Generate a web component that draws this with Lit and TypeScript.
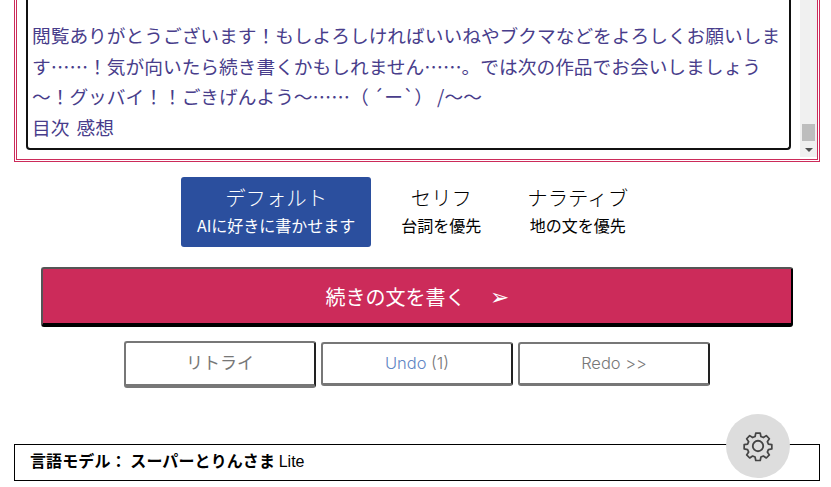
import { css, html, LitElement } from "lit";
import { customElement } from "lit/decorators.js";

@customElement("app-root")
export class AppRoot extends LitElement {
  render() {
    return html`
      <main>
        <section class="story-frame">
          <div class="story">
            <p class="spacer"></p>
            <p>閲覧ありがとうございます！もしよろしければいいねやブクマなどをよろしくお願いします……！気が向いたら続き書くかもしれません……。では次の作品でお会いしましょう～！グッバイ！！ごきげんよう～……（ ´ー\`） /～～</p>
            <p class="links">目次 感想</p>
          </div>
          <div class="scrollbar">
            <span class="thumb"></span>
            <span class="arrow"></span>
          </div>
        </section>

        <nav class="modes">
          <button class="mode active">
            <span class="title">デフォルト</span>
            <span class="sub">AIに好きに書かせます</span>
          </button>
          <button class="mode">
            <span class="title">セリフ</span>
            <span class="sub">台詞を優先</span>
          </button>
          <button class="mode">
            <span class="title">ナラティブ</span>
            <span class="sub">地の文を優先</span>
          </button>
        </nav>

        <button class="write">続きの文を書く<span class="send">➢</span></button>

        <div class="actions">
          <button class="action retry">リトライ</button>
          <button class="action"><span class="undo">Undo</span> (1)</button>
          <button class="action">Redo &gt;&gt;</button>
        </div>

        <footer class="model">
          <b>言語モデル： スーパーとりんさま</b> <span class="lite">Lite</span>
          <button class="settings" aria-label="設定">
            <svg viewBox="0 0 24 24" width="34" height="34" fill="none" stroke="#444" stroke-width="1.3" stroke-linejoin="round">
              <path d="M10.3 2.6h3.4l.5 2.6 1.9.8 2.2-1.5 2.3 2.4-1.5 2.2.8 1.9 2.6.4v3.2l-2.6.5-.8 1.9 1.5 2.2-2.3 2.3-2.2-1.5-1.9.8-.5 2.6h-3.4l-.5-2.6-1.9-.8-2.2 1.5-2.3-2.3 1.5-2.2-.8-1.9-2.6-.5v-3.2l2.6-.4.8-1.9-1.5-2.2 2.3-2.4 2.2 1.5 1.9-.8z" transform="translate(12 12) scale(.93) translate(-12 -12.4)"/>
              <circle cx="12" cy="12" r="3.7"/>
            </svg>
          </button>
        </footer>
      </main>
    `;
  }

  static styles = css`
    :host {
      display: block;
      height: 487px;
      overflow: hidden;
      background: #fff;
      font-family: "Noto Sans CJK JP", "Liberation Sans", sans-serif;
    }

    main {
      padding: 0 11px 0 14px;
    }

    button {
      font-family: inherit;
      cursor: pointer;
    }

    .story-frame {
      box-sizing: border-box;
      height: 162px;
      display: flex;
      gap: 9px;
      padding: 0 0 2px 9px;
      border: 3px double #cc2b5a;
      border-top: 0;
    }

    .story {
      flex: 1;
      box-sizing: border-box;
      height: 150px;
      padding: 0 4px;
      border: 2px solid #111;
      border-top: 0;
      border-radius: 0 0 4px 4px;
      color: #483d8b;
      font-size: 18.72px;
      line-height: 30.6px;
    }

    .story p {
      margin: 0;
    }

    .story .spacer {
      height: 20px;
    }

    .story .links {
      word-spacing: 3px;
    }

    .scrollbar {
      width: 17px;
      position: relative;
      background: #f0f0f0;
    }

    .thumb {
      position: absolute;
      left: 2px;
      right: 2px;
      top: 124px;
      height: 17px;
      background: #bdbdbd;
    }

    .arrow {
      position: absolute;
      left: 5px;
      top: 148px;
      border: 4px solid transparent;
      border-top: 4px solid #505050;
    }

    .modes {
      display: flex;
      justify-content: center;
      gap: 14px;
      margin-top: 15px;
      padding-right: 9px;
    }

    .mode {
      display: flex;
      flex-direction: column;
      align-items: center;
      height: 70px;
      padding: 7px 16px 0;
      border: 0;
      border-radius: 3px;
      background: none;
      color: #000;
    }

    .mode.active {
      background: #2b4f9e;
      color: #fff;
    }

    .title {
      font-size: 20.4px;
      font-weight: 300;
      line-height: 27px;
    }

    .sub {
      font-size: 16px;
      line-height: 26px;
      margin-top: 1px;
    }

    .write {
      display: block;
      box-sizing: border-box;
      width: 752px;
      height: 60px;
      margin: 20px 0 0 27px;
      padding-bottom: 4px;
      border: solid #555;
      border-width: 2px 2px 4px 2px;
      border-right-color: #000;
      border-bottom-color: #000;
      border-radius: 3px;
      background: #cc2b5a;
      color: #fff;
      font-size: 20px;
    }

    .send {
      margin-left: 24px;
      font-size: 23px;
    }

    .actions {
      display: flex;
      align-items: flex-start;
      justify-content: center;
      gap: 5px;
      margin-top: 14px;
    }

    .action {
      box-sizing: border-box;
      width: 192px;
      height: 44px;
      margin-top: 1px;
      padding-bottom: 3px;
      border: 2px solid #777;
      border-right-color: #222;
      border-bottom: 3px solid #777;
      border-radius: 3px;
      background: #fff;
      color: #777;
      font-family: Inter, "Noto Sans CJK JP", sans-serif;
      font-size: 16.5px;
      font-weight: 300;
    }

    .action.retry {
      height: 47px;
      margin-top: 0;
      padding-bottom: 6px;
      border-bottom-width: 4px;
      font-family: "Noto Sans CJK JP", sans-serif;
      font-size: 17px;
      font-weight: 400;
    }

    .undo {
      color: #5f86c4;
    }

    .model {
      position: relative;
      box-sizing: border-box;
      height: 37px;
      margin-top: 56px;
      padding: 0 15px;
      border: 1px solid #000;
      color: #000;
      font-size: 16px;
      line-height: 31px;
    }

    .model b {
      font-weight: 700;
      letter-spacing: 0.1px;
    }

    .lite {
      font-family: "Liberation Sans", sans-serif;
      font-size: 16px;
    }

    .settings {
      position: absolute;
      top: -31px;
      left: 711px;
      display: flex;
      align-items: center;
      justify-content: center;
      width: 64px;
      height: 64px;
      padding: 0;
      border: 0;
      border-radius: 50%;
      background: #ddd;
    }
  `;
}
